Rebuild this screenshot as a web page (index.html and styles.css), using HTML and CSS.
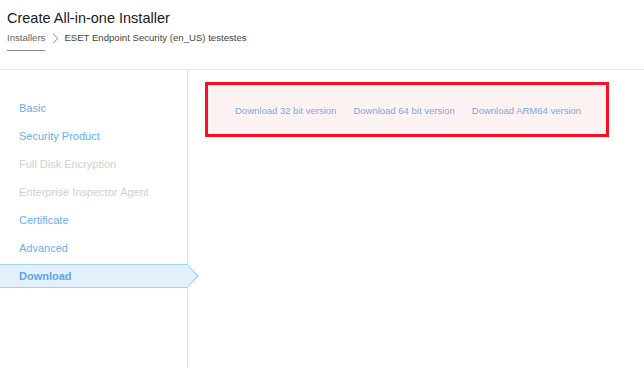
FILE: index.html
```html
<!DOCTYPE html>
<html>
<head>
<meta charset="utf-8">
<link rel="stylesheet" href="styles.css">
</head>
<body>
<header class="header">
  <h1 class="title">Create All-in-one Installer</h1>
  <nav class="crumbs">
    <a class="crumb-link">Installers</a>
    <svg class="crumb-sep" width="7" height="11" viewBox="0 0 7 11"><path d="M1 0.8 L5.8 5.5 L1 10.2" fill="none" stroke="#8a8a8a" stroke-width="1"/></svg>
    <span class="crumb-current">ESET Endpoint Security (en_US) testestes</span>
  </nav>
</header>
<main class="main">
  <aside class="sidebar">
    <ul class="menu">
      <li class="item">Basic</li>
      <li class="item">Security Product</li>
      <li class="item disabled">Full Disk Encryption</li>
      <li class="item disabled">Enterprise Inspector Agent</li>
      <li class="item">Certificate</li>
      <li class="item">Advanced</li>
      <li class="item active">Download</li>
    </ul>
  </aside>
  <section class="content">
    <div class="download-box">
      <a class="dl-link">Download 32 bit version</a>
      <a class="dl-link">Download 64 bit version</a>
      <a class="dl-link">Download ARM64 version</a>
    </div>
  </section>
</main>
</body>
</html>
```
FILE: styles.css
```css
* { box-sizing: border-box; }
html, body { margin: 0; padding: 0; background: #fff; }
body {
  font-family: "Liberation Sans", Arial, sans-serif;
  width: 644px;
  height: 368px;
  overflow: hidden;
}
.header {
  height: 70px;
  border-bottom: 1px solid #e4e4e4;
  padding: 8px 7px 0;
}
.title {
  margin: 0;
  font-size: 14.5px;
  font-weight: normal;
  color: #1a1a1a;
  line-height: 20px;
}
.crumbs {
  display: flex;
  align-items: flex-start;
  margin-top: 3px;
  font-size: 9.6px;
  line-height: 14px;
  color: #444;
}
.crumb-link {
  color: #666;
  padding-bottom: 5px;
  border-bottom: 1px solid #8c8c8c;
}
.crumb-sep { margin: 2px 5px 0 7px; }
.crumb-current { color: #444; }
.main {
  display: flex;
  height: 298px;
}
.sidebar {
  width: 188px;
  border-right: 1px solid #e2e2e2;
  padding-top: 26px;
}
.menu {
  list-style: none;
  margin: 0;
  padding: 0;
  display: flex;
  flex-direction: column;
  gap: 4px;
}
.item {
  height: 24px;
  line-height: 22px;
  padding-left: 19px;
  font-size: 11px;
  color: #68aef0;
  border-top: 1px solid transparent;
  border-bottom: 1px solid transparent;
  position: relative;
}
.item.disabled { color: #cfcfcf; }
.item.active {
  background: #e3f1fc;
  border-color: #9fd2f6;
  font-weight: bold;
  color: #5ea6ea;
  width: 187px;
}
.item.active::after {
  content: "";
  position: absolute;
  right: -12px;
  top: -1px;
  width: 0;
  height: 0;
  border-top: 12px solid transparent;
  border-bottom: 12px solid transparent;
  border-left: 12px solid #9fd2f6;
}
.item.active::before {
  content: "";
  position: absolute;
  right: -10px;
  top: 0;
  width: 0;
  height: 0;
  border-top: 11px solid transparent;
  border-bottom: 11px solid transparent;
  border-left: 10px solid #e3f1fc;
  z-index: 1;
}
.content {
  flex: 1;
  padding: 12px 0 0 17px;
}
.download-box {
  width: 404px;
  height: 55px;
  border: 3px solid #ff0b24;
  background: #fdf2f2;
  display: flex;
  align-items: center;
  padding: 2px 0 0 27px;
  gap: 17px;
}
.dl-link {
  font-size: 9.5px;
  color: #7ba8e6;
}
```
